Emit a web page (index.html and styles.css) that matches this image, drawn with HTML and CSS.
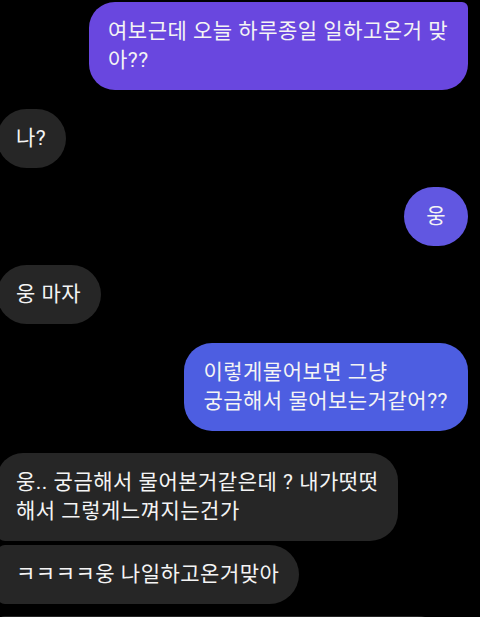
FILE: index.html
```html
<!DOCTYPE html>
<html lang="ko">
<head>
<meta charset="utf-8">
<link rel="stylesheet" href="styles.css">
</head>
<body>
<div class="thread">
  <div class="row out"><div class="bubble b-purple first">여보근데 오늘 하루종일 일하고온거 맞<br>아??</div></div>
  <div class="row in"><div class="bubble gray">나?</div></div>
  <div class="row out"><div class="bubble b-mid round">웅</div></div>
  <div class="row in"><div class="bubble gray">웅 마자</div></div>
  <div class="row out"><div class="bubble b-blue">이렇게물어보면 그냥<br>궁금해서 물어보는거같어??</div></div>
  <div class="group in">
    <div class="bubble gray top">웅.. 궁금해서 물어본거같은데 ? 내가떳떳<br>해서 그렇게느껴지는건가</div>
    <div class="bubble gray mid">ㅋㅋㅋㅋ웅 나일하고온거맞아</div>
    <div class="bubble gray bottom wide">&nbsp;</div>
  </div>
</div>
</body>
</html>
```

FILE: styles.css
```css
html, body {
  margin: 0;
  padding: 0;
  background: #000;
  overflow: hidden;
}

body {
  width: 480px;
  height: 617px;
  font-family: Roboto, "Noto Sans CJK KR", sans-serif;
  color: #f4f4f4;
}

.thread {
  display: flex;
  flex-direction: column;
  padding: 2px 12px 0 0;
}

.row {
  display: flex;
  margin-bottom: 19px;
}

.row.out {
  justify-content: flex-end;
}

.row.in {
  justify-content: flex-start;
  margin-left: -3px;
}

.group {
  display: flex;
  flex-direction: column;
  align-items: flex-start;
  gap: 4px;
  margin-left: -3px;
  margin-top: 3px;
}

.bubble {
  font-size: 21px;
  line-height: 29px;
  padding: 15px 20px 15px 19px;
  border-radius: 30px;
  white-space: nowrap;
  letter-spacing: 0.5px;
}

.gray {
  background: #262626;
}

.b-purple {
  background: #6947df;
  border-radius: 26px 6px 26px 26px;
  padding-right: 20px;
}

.b-mid {
  background: #6157e1;
}

.round {
  width: 24px;
  padding-left: 20px;
  padding-right: 20px;
  text-align: center;
  letter-spacing: 0;
}

.b-blue {
  background: #4d5ee1;
  border-radius: 28px;
  padding-right: 20px;
}

.group .top {
  border-radius: 26px 28px 28px 8px;
  padding-right: 20px;
}

.group .mid {
  border-radius: 8px 30px 30px 8px;
  padding-right: 20px;
}

.group .wide {
  width: 411px;
  margin-top: 8px;
  border-radius: 8px 30px 30px 26px;
}
```
